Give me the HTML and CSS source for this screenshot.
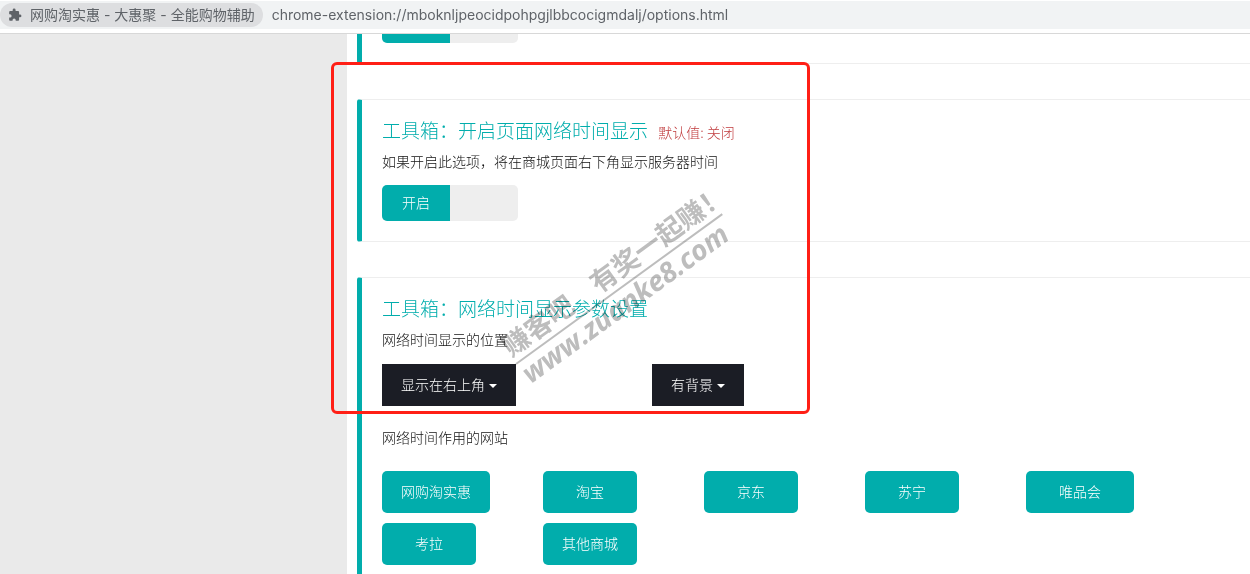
FILE: index.html
```html
<!DOCTYPE html>
<html lang="zh-CN">
<head>
<meta charset="utf-8">
<title>网购淘实惠 - 大惠聚 - 全能购物辅助</title>
<link rel="stylesheet" href="styles.css">
</head>
<body>
<header class="toolbar">
  <div class="address">
    <span class="site-chip">
      <svg class="puzzle" viewBox="0 0 24 24" aria-hidden="true"><path d="M20.5 11H19V7c0-1.100-.9-2-2-2h-4V3.500a2.500 2.500 0 0 0-5 0V5H4c-1.100 0-2 .9-2 2v3.800h1.500a2.700 2.700 0 0 1 0 5.400H2V20c0 1.100.9 2 2 2h3.800v-1.500a2.700 2.700 0 0 1 5.400 0V22H17c1.100 0 2-.9 2-2v-4h1.500a2.500 2.500 0 0 0 0-5z"/></svg>
      网购淘实惠 - 大惠聚 - 全能购物辅助
    </span>
    <span class="url">chrome-extension://mboknljpeocidpohpgjlbbcocigmdalj/options.html</span>
  </div>
</header>
<div class="page">
  <aside class="sidebar"></aside>
  <main class="options">
    <section class="callout">
      <label class="switch"><input type="checkbox" checked aria-label="开启"><span class="switch-on"></span></label>
    </section>
    <section class="callout">
      <h2 class="title">工具箱：开启页面网络时间显示 <small class="default">默认值: 关闭</small></h2>
      <p class="text">如果开启此选项，将在商城页面右下角显示服务器时间</p>
      <label class="switch"><input type="checkbox" checked><span class="switch-on">开启</span></label>
    </section>
    <section class="callout">
      <h2 class="title">工具箱：网络时间显示参数设置</h2>
      <p class="text" id="position">网络时间显示的位置</p>
      <div class="selects">
        <div class="dropdown"><select aria-labelledby="position"><option>显示在右上角</option></select></div>
        <div class="dropdown"><select aria-label="背景"><option>有背景</option></select></div>
      </div>
      <p class="text">网络时间作用的网站</p>
      <div class="sites">
        <button type="button" class="site wide">网购淘实惠</button>
        <button type="button" class="site">淘宝</button>
        <button type="button" class="site">京东</button>
        <button type="button" class="site">苏宁</button>
        <button type="button" class="site wide">唯品会</button>
        <button type="button" class="site">考拉</button>
        <button type="button" class="site">其他商城</button>
      </div>
    </section>
  </main>
</div>
<svg class="watermark" width="280" height="220" viewBox="0 0 280 220">
  <g transform="translate(26 179) rotate(-36)">
    <text class="mark-cn" x="0" y="-8">赚客吧　有奖一起赚！</text>
    <path d="M0 0H255" stroke="#bdbdbd" stroke-width="2"/>
    <text class="mark-url" x="0" y="25">www.zuanke8.com</text>
  </g>
</svg>
<div class="highlight"></div>
</body>
</html>
```

FILE: styles.css
```css
* { box-sizing: border-box; }

body {
  margin: 0;
  height: 100vh;
  display: flex;
  flex-direction: column;
  overflow: hidden;
  background: #fff;
  color: #111;
  font-family: "Noto Sans CJK SC", sans-serif;
  font-size: 14px;
  font-weight: 300;
  line-height: 20px;
}

.toolbar {
  padding: 1px 0 4px;
  border-bottom: 1px solid #d8d8d8;
}

.address {
  display: flex;
  align-items: center;
  gap: 9px;
  height: 28px;
  background: #f1f3f4;
  color: #5f6368;
  font-family: Inter, "Noto Sans CJK SC", sans-serif;
  font-weight: 400;
}

.site-chip {
  display: flex;
  align-items: center;
  gap: 8px;
  height: 24px;
  padding: 0 8px;
  border-radius: 12px;
  background: #dddee0;
  white-space: nowrap;
}

.puzzle {
  width: 14px;
  height: 14px;
  fill: #5f6368;
}

.page {
  flex: 1;
  min-height: 0;
  display: flex;
  overflow: hidden;
}

.sidebar {
  flex: 0 0 347px;
  background: #eaeaea;
}

.options {
  flex: 1;
  display: flex;
  flex-direction: column;
  gap: 35px;
  margin-top: -48px;
  padding-left: 10px;
}

.callout {
  flex: none;
  padding: 20px;
  border: 1px solid #eee;
  border-left: 5px solid #01adac;
  border-right: 0;
  border-radius: 3px 0 0 3px;
}

.title {
  margin: 0;
  color: #01adac;
  font-size: 19px;
  font-weight: 300;
  line-height: 20px;
}

.default {
  margin-left: 6px;
  color: #c03c3e;
  font-size: 14px;
  line-height: 1;
}

.text { margin: 11px 0 14px; }

.switch {
  display: flex;
  width: 136px;
  height: 36px;
  overflow: hidden;
  border-radius: 5px;
  background: #eee;
}

.switch input {
  width: 0;
  height: 0;
  margin: 0;
  appearance: none;
}

.switch-on {
  width: 50%;
  background: #01adac;
  color: #fff;
  line-height: 34px;
  text-align: center;
}

.selects {
  display: grid;
  grid-template-columns: 134px 92px;
  gap: 136px;
  margin: 15px 0 21px;
}

.dropdown { display: grid; align-items: center; }

.dropdown select {
  grid-area: 1 / 1;
  height: 42px;
  padding: 0 19px 2px;
  border: 0;
  border-radius: 0;
  appearance: none;
  background: #1b1d25;
  color: #fff;
  font: inherit;
}

.dropdown::after {
  content: "";
  grid-area: 1 / 1;
  justify-self: end;
  margin: 2px 19px 0 0;
  border: 4px solid transparent;
  border-top-color: #fff;
  border-bottom: 0;
  pointer-events: none;
}

.sites {
  display: grid;
  grid-template-columns: repeat(5, 161px);
  justify-items: start;
  row-gap: 10px;
  margin-top: 24px;
}

.site {
  width: 94px;
  height: 42px;
  padding: 0 0 2px;
  border: 0;
  border-radius: 5px;
  background: #01adac;
  color: #fff;
  font: inherit;
}

.site.wide { width: 108px; }

.watermark {
  position: absolute;
  left: 490px;
  top: 185px;
  overflow: visible;
  mix-blend-mode: multiply;
  pointer-events: none;
}

.mark-cn, .mark-url { fill: #bdbdbd; font-weight: 700; }

.mark-cn {
  font-family: "Noto Sans CJK TC", sans-serif;
  font-size: 27px;
}

.mark-url {
  font-family: "Open Sans", sans-serif;
  font-size: 28px;
  font-style: italic;
}

.highlight {
  position: absolute;
  left: 331px;
  top: 62px;
  width: 479px;
  height: 352px;
  border: 3px solid #ff1f16;
  border-radius: 6px;
  pointer-events: none;
}
```
